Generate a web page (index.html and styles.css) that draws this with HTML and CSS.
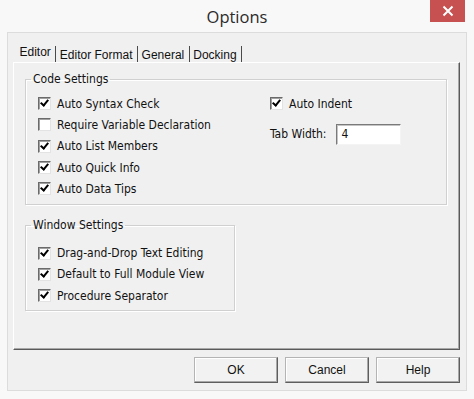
FILE: index.html
```html
<!DOCTYPE html>
<html>
<head>
<meta charset="utf-8">
<link rel="stylesheet" href="styles.css">
</head>
<body>
<div class="window">
  <div class="titlebar">
    <span></span>
    <span class="title">Options</span>
    <span class="close-btn"><svg width="12" height="12" viewBox="0 0 12 12"><path d="M1.5 1.5 L10.5 10.5 M10.5 1.5 L1.5 10.5" stroke="#fff" stroke-width="2" fill="none"/></svg></span>
  </div>
  <div class="dialog">
    <div class="tabs">
      <span class="tab active">Editor</span>
      <span class="tab">Editor Format</span>
      <span class="tab">General</span>
      <span class="tab">Docking</span>
    </div>
    <div class="page">
      <fieldset class="group code">
        <legend>Code Settings</legend>
        <div class="code-grid">
          <div class="col">
            <div class="row"><span class="cb checked"></span>Auto Syntax Check</div>
            <div class="row"><span class="cb"></span>Require Variable Declaration</div>
            <div class="row"><span class="cb checked"></span>Auto List Members</div>
            <div class="row"><span class="cb checked"></span>Auto Quick Info</div>
            <div class="row"><span class="cb checked"></span>Auto Data Tips</div>
          </div>
          <div class="col">
            <div class="row"><span class="cb checked"></span>Auto Indent</div>
            <div class="field-row"><span class="field-label">Tab Width:</span><span class="input">4</span></div>
          </div>
        </div>
      </fieldset>
      <fieldset class="group window-settings">
        <legend>Window Settings</legend>
        <div class="row"><span class="cb checked"></span>Drag-and-Drop Text Editing</div>
        <div class="row"><span class="cb checked"></span>Default to Full Module View</div>
        <div class="row"><span class="cb checked"></span>Procedure Separator</div>
      </fieldset>
    </div>
    <div class="buttons">
      <span class="btn">OK</span>
      <span class="btn">Cancel</span>
      <span class="btn">Help</span>
    </div>
  </div>
</div>
</body>
</html>
```
FILE: styles.css
```css
* { box-sizing: border-box; }
html, body { margin: 0; padding: 0; }
body {
  width: 474px;
  height: 399px;
  background: #f8f8f8;
  overflow: hidden;
}
.window {
  width: 474px;
  height: 399px;
  display: flex;
  flex-direction: column;
}
.titlebar {
  height: 32px;
  display: grid;
  grid-template-columns: 1fr auto 1fr;
  align-items: start;
}
.title {
  font-family: "Open Sans", "Noto Sans", sans-serif;
  font-size: 16.5px;
  color: #2b2b2b;
  line-height: 20px;
  margin-top: 7px;
}
.close-btn {
  justify-self: end;
  margin-right: 9px;
  width: 35px;
  height: 22px;
  background: #c75150;
  display: flex;
  align-items: center;
  justify-content: center;
}
.close-btn svg { display: block; }
.dialog {
  margin-left: 7px;
  width: 460px;
  height: 359px;
  background: #f0f0f0;
  border: 1px solid #dcdcdc;
  padding: 13px 6px 0 5px;
  display: flex;
  flex-direction: column;
}
.tabs {
  display: flex;
  height: 16px;
  padding-left: 3px;
  font-family: "Liberation Sans", Arial, sans-serif;
  font-size: 12px;
  color: #111;
}
.tab {
  padding: 0 4.5px 0 3.5px;
  border-right: 1px solid #4a4a4a;
  line-height: 16px;
  padding-top: 1px;
}
.tab.active {
  padding-top: 0;
  line-height: 13px;
  padding-left: 3.5px;
}
.page {
  width: 447px;
  height: 288px;
  border-left: 1px solid #ffffff;
  border-top: 1px solid #ffffff;
  border-right: 1px solid #5a5a5a;
  border-bottom: 1px solid #5a5a5a;
  box-shadow: inset -1px -1px 0 #a8a8a8;
  padding: 0 12px 0 11px;
  display: flex;
  flex-direction: column;
  align-items: flex-start;
  font-family: "DejaVu Sans Condensed", "DejaVu Sans", sans-serif;
  font-size: 12px;
  color: #111;
}
.group {
  margin: 0;
  border: 1px solid #d0d0d0;
  box-shadow: 1px 1px 0 #ffffff, inset 1px 1px 0 #ffffff;
  padding: 0 0 0 12px;
  min-width: 0;
}
.group legend {
  font-size: 12px;
  line-height: 16px;
  padding: 0 2px;
  margin-left: -7px;
  color: #111;
}
.code {
  width: 422px;
  margin-top: 8px;
  padding-top: 6px;
  padding-bottom: 5px;
}
.window-settings {
  width: 210px;
  margin-top: 12px;
  padding-top: 9px;
  padding-bottom: 4px;
}
.code-grid {
  display: grid;
  grid-template-columns: 232px 1fr;
}
.row {
  height: 21.3px;
  display: flex;
  align-items: center;
  gap: 6px;
  white-space: nowrap;
}
.cb {
  width: 13px;
  height: 13px;
  flex: none;
  background: #fff;
  border-top: 1px solid #6a6a6a;
  border-left: 1px solid #6a6a6a;
  border-right: 1px solid #e3e3e3;
  border-bottom: 1px solid #e3e3e3;
  box-shadow: inset 1px 1px 0 #a0a0a0;
  position: relative;
}
.cb.checked::after {
  content: "";
  position: absolute;
  width: 3px;
  height: 6px;
  border-right: 2px solid #000;
  border-bottom: 2px solid #000;
  transform: rotate(40deg);
  transform-origin: center;
  left: 3px;
  top: 0px;
}
.field-row {
  margin-top: 10px;
  display: flex;
  align-items: center;
  gap: 10px;
}
.field-label {
  line-height: 21px;
}
.input {
  width: 65px;
  height: 21px;
  background: #fff;
  border-top: 1px solid #7a7a7a;
  border-left: 1px solid #7a7a7a;
  border-right: 1px solid #f4f4f4;
  border-bottom: 1px solid #f4f4f4;
  box-shadow: inset 1px 1px 0 #c4c4c4;
  padding-left: 4px;
  line-height: 18px;
}
.buttons {
  margin-top: 7px;
  display: flex;
  justify-content: flex-end;
  gap: 7px;
}
.btn {
  width: 84px;
  height: 26px;
  display: flex;
  align-items: center;
  justify-content: center;
  background: #f2f2f2;
  border-top: 1px solid #b4b4b4;
  border-left: 1px solid #b4b4b4;
  border-right: 1px solid #5e5e5e;
  border-bottom: 1px solid #5e5e5e;
  box-shadow: inset -1px -1px 0 #a8a8a8, inset 1px 1px 0 #ffffff;
  font-family: "Liberation Sans", Arial, sans-serif;
  font-size: 12px;
  color: #111;
}
```
